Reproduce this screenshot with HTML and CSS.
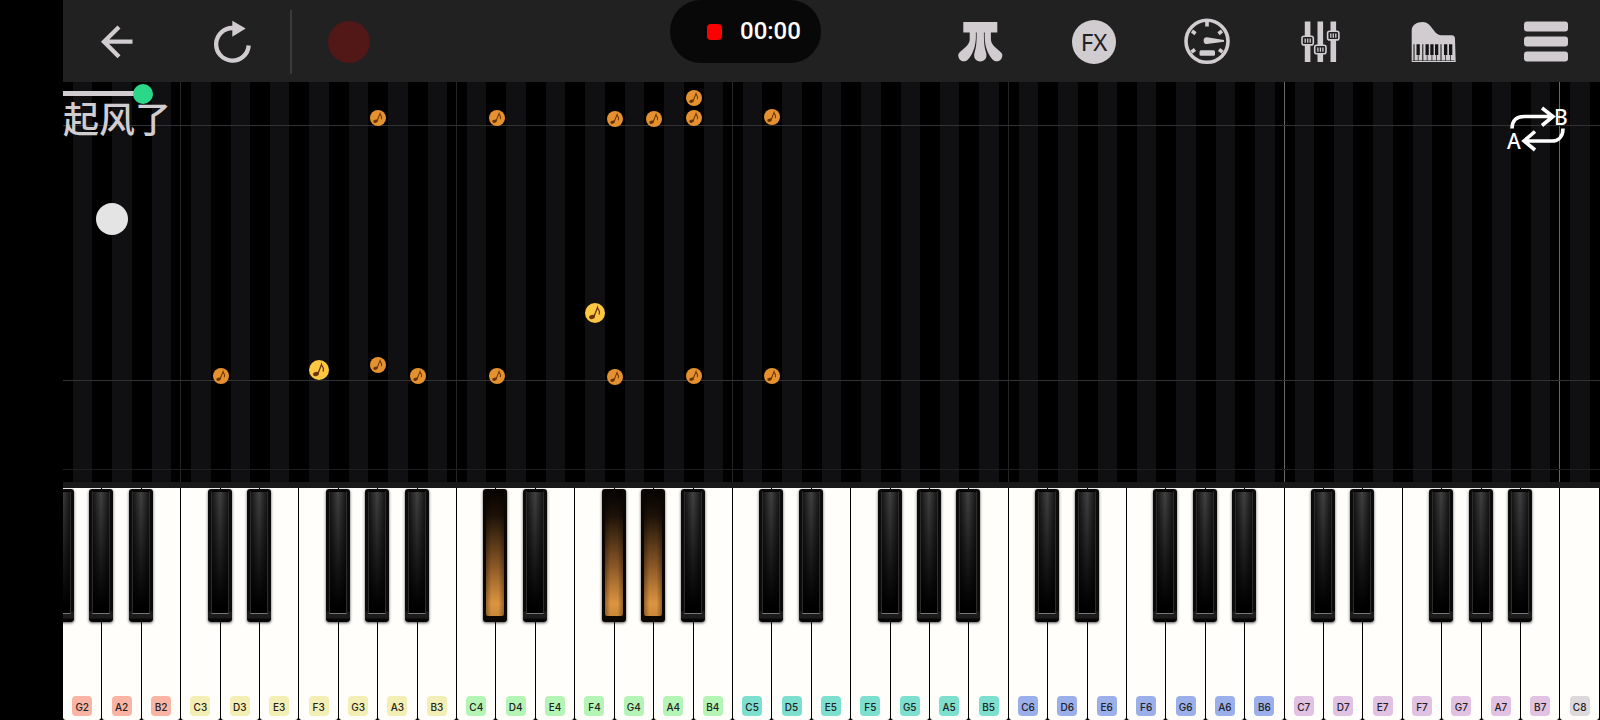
FILE: index.html
```html
<!DOCTYPE html>
<html lang="zh-CN">
<head>
<meta charset="utf-8">
<meta name="viewport" content="width=device-width, initial-scale=1">
<title>起风了</title>
<link rel="stylesheet" href="styles.css">
<script src="keyboard.js" defer></script>
</head>
<body>
<svg class="defs" aria-hidden="true">
  <symbol id="note" viewBox="0 0 20 20">
    <ellipse cx="7" cy="14" rx="3" ry="2" transform="rotate(-15 7 14)"/>
    <path d="M9 13.500 12.500 4.500C13 7.500 16 7.500 14 11.500" fill="none" stroke="currentColor" stroke-width="1.300"/>
  </symbol>
</svg>
<div class="app">
  <header class="toolbar">
    <div class="group group-left">
      <button class="tool" aria-label="Back">
        <svg viewBox="0 0 44 44"><path d="M37.500 21.700H9M24 7 9 21.700l15 15" fill="none" stroke="currentColor" stroke-width="4.300"/></svg>
      </button>
      <button class="tool" aria-label="Restart">
        <svg viewBox="0 0 44 44"><path d="M23 8A16.300 16.300 0 1 0 38.700 25.500" fill="none" stroke="currentColor" stroke-width="4.300"/><path d="M22.300.7 35.700 8.500l-13.400 8.200z"/></svg>
      </button>
      <span class="divider"></span>
      <button class="tool record" aria-label="Record"></button>
    </div>
    <div class="group group-right">
      <button class="tool" aria-label="Pedals">
        <svg viewBox="0 0 44 44"><path d="M4.300 2h34v10.500h-34z"/><path d="M10.700 12h6.100C17.300 20 16.300 28 12.600 34.500 9.500 39.500 8 41.300 4.800 41.300 1 41.300-1 38-.7 34.500 0 31 10 27 10.700 20z"/><path d="M31.900 12h-6.100C25.300 20 26.300 28 30 34.500c3 5 4.600 6.800 7.800 6.800 3.800 0 5.800-3.300 5.500-6.800C42.600 31 32.600 27 31.900 20z"/><path d="M17.700 12h7.200c0 9 .3 15 2 20 2 6-1.500 9.500-5.600 9.500s-7.600-3.500-5.600-9.500c1.700-5 2-11 2-20z"/></svg>
      </button>
      <button class="tool fx">FX</button>
      <button class="tool" aria-label="Metronome">
        <svg viewBox="0 0 44 44"><circle cx="22" cy="21.300" r="21" fill="none" stroke="currentColor" stroke-width="3.600"/><path d="M22 1v5.500M7 11l3.500 2.700M37 11l-3.500 2.700M6.500 32l3.500-2.500M37.500 32 34 29.500" stroke="currentColor" stroke-width="3.600"/><path d="M22 17.300a3.400 3.400 0 0 0 0 6.800L39 21.700v-1.600z"/><rect x="14.500" y="30.200" width="15.500" height="5.600" rx="1.500"/></svg>
      </button>
      <button class="tool" aria-label="Mixer">
        <svg viewBox="0 0 44 44"><path d="M6.800 1.500h5.600V42H6.800zM19.500 1.500h5.600V42h-5.600zM32.500 1.500h5.600V42h-5.600z"/><g class="cap"><rect x="4" y="16.300" width="11.300" height="8.600" rx="2"/><rect x="16.700" y="25.200" width="11.300" height="8.600" rx="2"/><rect x="29.600" y="11.300" width="11.300" height="8.600" rx="2"/></g><path d="M7.200 18.500v4.300M9.700 18.500v4.300M12.200 18.500v4.300M19.900 27.400v4.300M22.400 27.400v4.300M24.900 27.400v4.300M32.800 13.500v4.300M35.300 13.500v4.300M37.800 13.500v4.300" stroke="currentColor" stroke-width="1.300"/></svg>
      </button>
      <button class="tool" aria-label="Instrument">
        <svg viewBox="0 0 44 44"><path d="M.7 42V10C1 5 5.500 2 11.700 2 21 2 22 14.700 30 15.200h10c3 0 4 1 4 4l.7 22.800z"/><path d="M2.500 24.300h1v16.500h-1zM5.500 24.300h3.300V35H5.500zM11.300 24.300h1v16.500h-1zM14.500 24.300h3.300V35h-3.300zM19.300 24.300h3.300V35h-3.300zM24 24.300h3.300V35H24zM29.500 24.300h1v16.500h-1zM33 24.300h3.300V35H33zM38 24.300h3.300V35H38zM6.800 34h.7v7h-.7zM15.800 34h.7v7h-.7zM20.600 34h.7v7h-.7zM25.300 34h.7v7h-.7zM34.300 34h.7v7h-.7zM39.300 34h.7v7h-.7zM1.500 40.500h42v.6h-42z" class="ink"/></svg>
      </button>
      <button class="tool" aria-label="Menu">
        <svg viewBox="0 0 44 44"><rect y="1.500" width="44" height="10" rx="3"/><rect y="16.500" width="44" height="10" rx="3"/><rect y="31.500" width="44" height="10" rx="3"/></svg>
      </button>
    </div>
    <div class="timer"><span class="stop"></span><time>00:00</time></div>
  </header>

  <main class="stage">
    <div class="lanes" id="lanes"></div>
    <span class="beat beat-1"></span><span class="beat beat-2"></span><span class="beat beat-3"></span>
    <div class="notes" id="notes"></div>
    <div class="song">
      <input class="progress" type="range" min="0" max="1000" value="46" aria-label="Song position">
      <h1>起风了</h1>
    </div>
    <button class="assist" aria-label="Floating control"></button>
    <button class="loop" aria-label="Repeat from A to B">
      <svg viewBox="0 0 70 54"><g fill="none" stroke="currentColor" stroke-width="3.600"><path d="M9 26.500C9 18 14 14.500 21 14.500H49M39 6 50 14.500l-11 9"/><path d="M60 26.500C60 35 55 39 49 39H22M32 29.500 21 39l11 9"/></g><text x="4" y="47">A</text><text x="51" y="23">B</text></svg>
    </button>
  </main>

  <ol class="keyboard" id="keyboard"></ol>
</div>
</body>
</html>
```

FILE: keyboard.js
```js
const NAMES = ["C", "D", "E", "F", "G", "A", "B"];
const FIRST = 2 * 7 + 4;
const COUNT = 39;
const PRESSED = new Set(["C4", "F4", "G4"]);

// Falling notes: lane position counted in white keys, distance from the stage top, size.
const FALLING = [
  [8, 36], [11, 36], [14, 37], [15, 37], [16, 16], [16, 36], [18, 35],
  [13.5, 231, "large"], [6.5, 288, "large"],
  [4, 294], [8, 283], [9, 294], [11, 294], [14, 295], [16, 294], [18, 294]
];

const keyboard = document.getElementById("keyboard");
const lanes = document.getElementById("lanes");

function blackKey(label, extra) {
  const key = document.createElement("button");
  key.className = "black " + extra;
  key.setAttribute("aria-label", label);
  return key;
}

for (let i = 0; i < COUNT; i++) {
  const letter = NAMES[(FIRST + i) % 7];
  const octave = Math.floor((FIRST + i) / 7);
  const name = letter + octave;

  const item = document.createElement("li");
  item.className = "key";
  const white = document.createElement("button");
  white.className = "white";
  const chip = document.createElement("span");
  chip.className = "chip octave-" + octave;
  chip.textContent = name;
  white.append(chip);
  item.append(white);
  if (i === 0) item.append(blackKey("F sharp 2", "before"));
  if (letter !== "E" && letter !== "B" && i < COUNT - 1) {
    item.append(blackKey(letter + " sharp " + octave, PRESSED.has(name) ? "pressed" : ""));
  }
  keyboard.append(item);

  const lane = document.createElement("span");
  lane.className = "lane" + (letter === "C" ? " start" : "") + (letter === "C" && octave > 6 ? " bright" : "");
  lanes.append(lane);
}

const notes = document.getElementById("notes");
for (const [lane, top, size] of FALLING) {
  const note = document.createElement("span");
  note.className = "note " + (size || "");
  note.style.left = (lane / COUNT) * 100 + "%";
  note.style.top = top + "px";
  note.innerHTML = '<svg><use href="#note"/></svg>';
  notes.append(note);
}
```

FILE: styles.css
```css
* { box-sizing: border-box; }

body {
  margin: 0;
  background: #000;
  color: #d0cccf;
  font-family: "Noto Sans", "Noto Sans CJK SC", sans-serif;
}

button {
  padding: 0;
  border: 0;
  background: none;
  color: inherit;
  font: inherit;
}

.defs { position: absolute; width: 0; height: 0; }

.app {
  display: flex;
  flex-direction: column;
  min-height: 100vh;
  margin-left: 63px;
}

/* Toolbar */
.toolbar {
  position: relative;
  display: flex;
  justify-content: space-between;
  height: 82px;
  background: #222122;
}

.group { display: flex; align-items: center; padding-top: 2px; }
.group-left { padding-left: 32px; gap: 71px; }
.group-right { padding-right: 32px; gap: 69px; }

.tool { width: 44px; height: 44px; }
.tool svg { display: block; width: 44px; height: 44px; overflow: visible; fill: currentColor; }
.tool .ink { fill: #161516; }
.tool .cap { fill: #222122; stroke: currentColor; stroke-width: 1.6; }

.divider { width: 2px; height: 64px; margin: 0 -35px; background: #3b3a3b; }
.record { width: 42px; height: 42px; border-radius: 50%; background: #521717; }

.fx {
  border-radius: 50%;
  background: #d0cccf;
  color: #222122;
  font-size: 24px;
  line-height: 44px;
}

.timer {
  position: absolute;
  top: 0;
  left: 607px;
  display: flex;
  align-items: center;
  gap: 18px;
  height: 63px;
  padding: 0 20px 0 37px;
  border-radius: 31px;
  background: #080808;
  color: #fff;
  font: 500 24px/63px Roboto, sans-serif;
}

.stop { width: 15px; height: 16px; border-radius: 4px; background: #f00; }

/* Falling-note stage */
.stage {
  position: relative;
  flex: 1;
  min-height: 400px;
  border-bottom: 6px solid #1a191a;
  background: #000;
}

.lanes { position: absolute; inset: 0; display: flex; }
.lane {
  flex: 1;
  background: linear-gradient(90deg, transparent 25%, #101012 25% 75%, transparent 75%);
}
.lane.start { box-shadow: -1px 0 #242424; }
.lane.bright { box-shadow: -1px 0 #686868; }

.beat { position: absolute; left: 0; right: 0; height: 1px; background: #323232; }
.beat-1 { top: 43px; }
.beat-2 { top: 298px; }
.beat-3 { top: 387px; background: #1e1e1e; }

.notes { position: absolute; inset: 0; }
.note {
  position: absolute;
  width: 16px;
  height: 16px;
  border-radius: 50%;
  background: #e5912f;
  color: #6b3409;
  transform: translate(-50%, -50%);
}
.note.large { width: 20px; height: 20px; background: #fdc743; }
.note svg { display: block; width: 100%; height: 100%; fill: currentColor; }

.song { position: relative; display: flex; flex-direction: column; padding-top: 2px; }
.song h1 {
  margin: 0;
  font: 500 36px/36px "Noto Sans CJK SC", sans-serif;
}

.progress {
  z-index: 1;
  appearance: none;
  width: 100%;
  height: 20px;
  margin: 0 0 -5px;
  background: linear-gradient(#d0cccf, #d0cccf) 0 7px / 5% 5px no-repeat;
}
.progress::-webkit-slider-thumb {
  appearance: none;
  width: 20px;
  height: 20px;
  border-radius: 50%;
  background: #2bd788;
}

.assist {
  position: absolute;
  top: 121px;
  left: 33px;
  width: 32px;
  height: 32px;
  border-radius: 50%;
  background: #e4e4e4;
}

.loop { position: absolute; top: 20px; right: 27px; width: 70px; height: 54px; color: #fff; }
.loop svg { display: block; width: 70px; height: 54px; overflow: visible; }
.loop text { fill: currentColor; font: 500 21px "Noto Sans", sans-serif; }

/* Keyboard */
.keyboard {
  display: flex;
  height: 232px;
  margin: 0;
  padding: 0;
  overflow: hidden;
  list-style: none;
}

.key { position: relative; flex: 1; min-width: 0; padding-right: 1px; }

.white {
  display: flex;
  align-items: flex-end;
  justify-content: center;
  width: 100%;
  height: 100%;
  padding-bottom: 4px;
  border-radius: 0 0 3px 3px;
  background: #fffefb;
}

.chip {
  width: 20px;
  height: 20px;
  border-radius: 4px;
  color: #222;
  font: 500 10px/22px Inter, sans-serif;
  text-align: center;
}
.octave-2 { background: #fab4a4; }
.octave-3 { background: #f3efb4; }
.octave-4 { background: #b4f5b6; }
.octave-5 { background: #7ddfce; }
.octave-6 { background: #9bb0ea; }
.octave-7 { background: #e2c2e2; }
.octave-8 { background: #dcd8dc; }

.black {
  position: absolute;
  z-index: 1;
  top: 1px;
  right: -11px;
  width: 24px;
  height: 133px;
  padding: 2px 3px 10px;
  border-radius: 3px;
  background: linear-gradient(#0b0b0b 122px, #1c1c1c 123px 129px, #050505 130px);
  box-shadow: 0 1px 3px #000a;
}
.black::before {
  content: "";
  display: block;
  height: 100%;
  border: 1px solid #2c2c2c;
  border-top-color: transparent;
  border-bottom-color: #777;
  background:
    linear-gradient(transparent, #000 95%),
    linear-gradient(90deg, #161616, #434243 50%, #161616);
}
.black.before { right: auto; left: -13px; }
.black.pressed { padding-bottom: 6px; background: #0b0503; }
.black.pressed::before {
  border: 0;
  border-radius: 2px;
  background:
    linear-gradient(90deg, #0005, transparent 30% 70%, #0005),
    linear-gradient(#050302, #1d1208 20%, #8a5726 60%, #dc9440 90%, #c98839);
}
```
